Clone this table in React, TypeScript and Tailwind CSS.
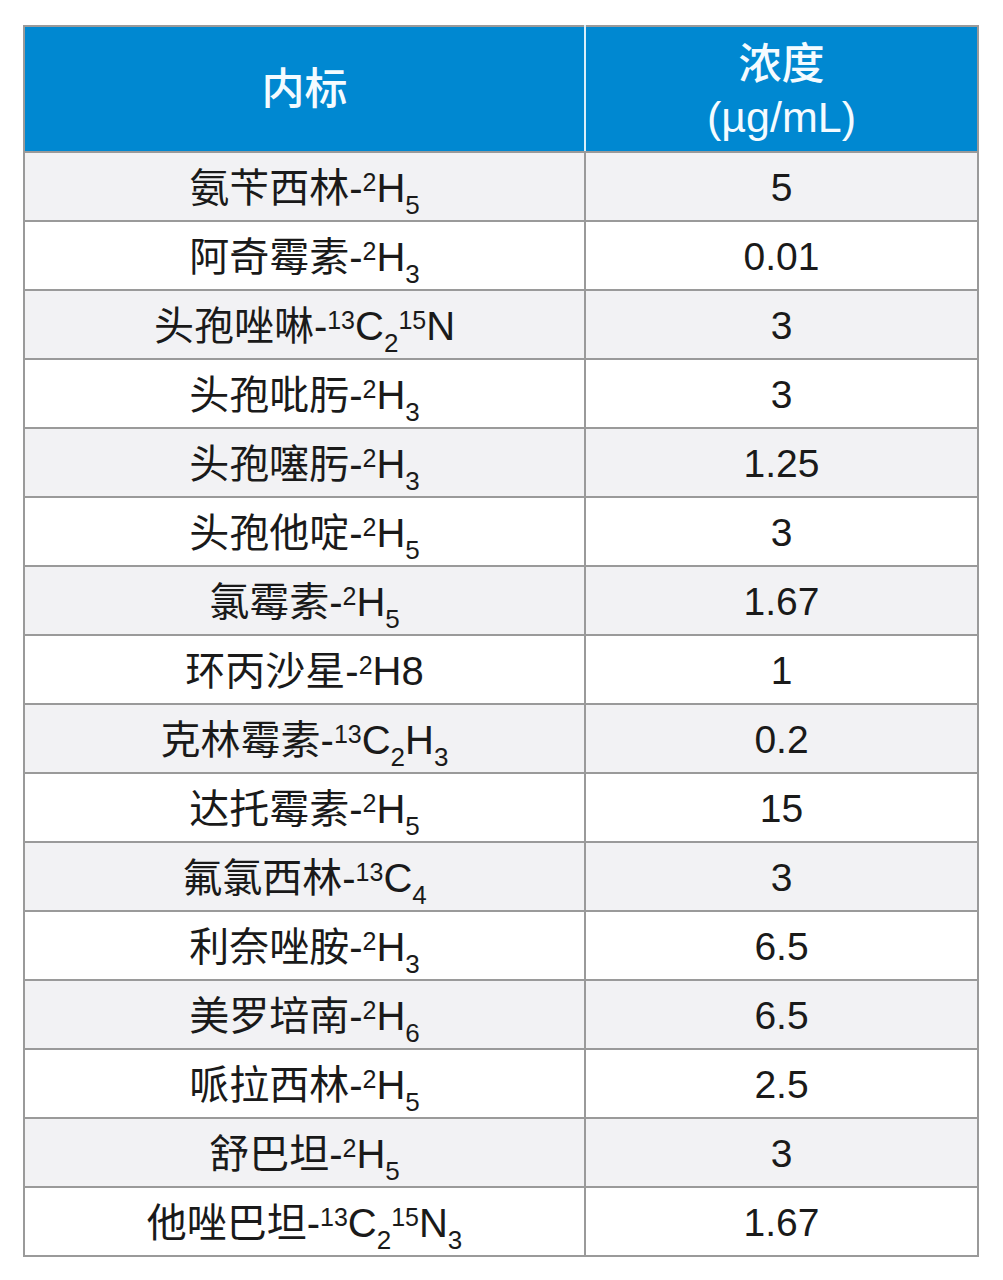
import type { ReactNode } from "react";

const Sup = ({ children }: { children: ReactNode }) => (
  <sup className="static text-[25px] leading-[0] align-[11px]">{children}</sup>
);

const Sub = ({ children }: { children: ReactNode }) => (
  <sub className="static text-[26px] leading-[0] align-[-12px]">{children}</sub>
);

const rows: { name: ReactNode; value: string }[] = [
  { name: <>氨苄西林-<Sup>2</Sup>H<Sub>5</Sub></>, value: "5" },
  { name: <>阿奇霉素-<Sup>2</Sup>H<Sub>3</Sub></>, value: "0.01" },
  { name: <>头孢唑啉-<Sup>13</Sup>C<Sub>2</Sub><Sup>15</Sup>N</>, value: "3" },
  { name: <>头孢吡肟-<Sup>2</Sup>H<Sub>3</Sub></>, value: "3" },
  { name: <>头孢噻肟-<Sup>2</Sup>H<Sub>3</Sub></>, value: "1.25" },
  { name: <>头孢他啶-<Sup>2</Sup>H<Sub>5</Sub></>, value: "3" },
  { name: <>氯霉素-<Sup>2</Sup>H<Sub>5</Sub></>, value: "1.67" },
  { name: <>环丙沙星-<Sup>2</Sup>H8</>, value: "1" },
  { name: <>克林霉素-<Sup>13</Sup>C<Sub>2</Sub>H<Sub>3</Sub></>, value: "0.2" },
  { name: <>达托霉素-<Sup>2</Sup>H<Sub>5</Sub></>, value: "15" },
  { name: <>氟氯西林-<Sup>13</Sup>C<Sub>4</Sub></>, value: "3" },
  { name: <>利奈唑胺-<Sup>2</Sup>H<Sub>3</Sub></>, value: "6.5" },
  { name: <>美罗培南-<Sup>2</Sup>H<Sub>6</Sub></>, value: "6.5" },
  { name: <>哌拉西林-<Sup>2</Sup>H<Sub>5</Sub></>, value: "2.5" },
  { name: <>舒巴坦-<Sup>2</Sup>H<Sub>5</Sub></>, value: "3" },
  { name: <>他唑巴坦-<Sup>13</Sup>C<Sub>2</Sub><Sup>15</Sup>N<Sub>3</Sub></>, value: "1.67" },
];

export default function App() {
  return (
    <div className="min-h-[1280px] w-[1003px] bg-white pl-[23px] pt-[25px] font-['Liberation_Sans','Noto_Sans_CJK_SC',sans-serif] text-[#1a1a1a]">
      <table className="w-[956px] table-fixed border-collapse">
        <thead>
          <tr className="h-[126px] bg-[#0088d1] text-[43px] text-[#f4fbff]">
            <th className="w-[561px] border-2 border-[#9a9a9a] border-r-[#d8eef9] text-center font-medium leading-[53px]">
              内标
            </th>
            <th className="border-2 border-[#9a9a9a] border-l-[#d8eef9] pt-[4px] text-center font-medium leading-[53px]">
              浓度
              <br />
              (µg/mL)
            </th>
          </tr>
        </thead>
        <tbody className="text-[40px]">
          {rows.map((row, i) => (
            <tr
              key={row.value + i}
              className={i % 2 === 0 ? "h-[69px] bg-[#f2f2f4]" : "h-[69px] bg-white"}
            >
              <td className="border-2 border-[#9a9a9a] pt-[2px] text-center leading-none whitespace-nowrap">
                {row.name}
              </td>
              <td className="border-2 border-[#9a9a9a] pt-[2px] text-center text-[39px] leading-none">
                {row.value}
              </td>
            </tr>
          ))}
        </tbody>
      </table>
    </div>
  );
}
